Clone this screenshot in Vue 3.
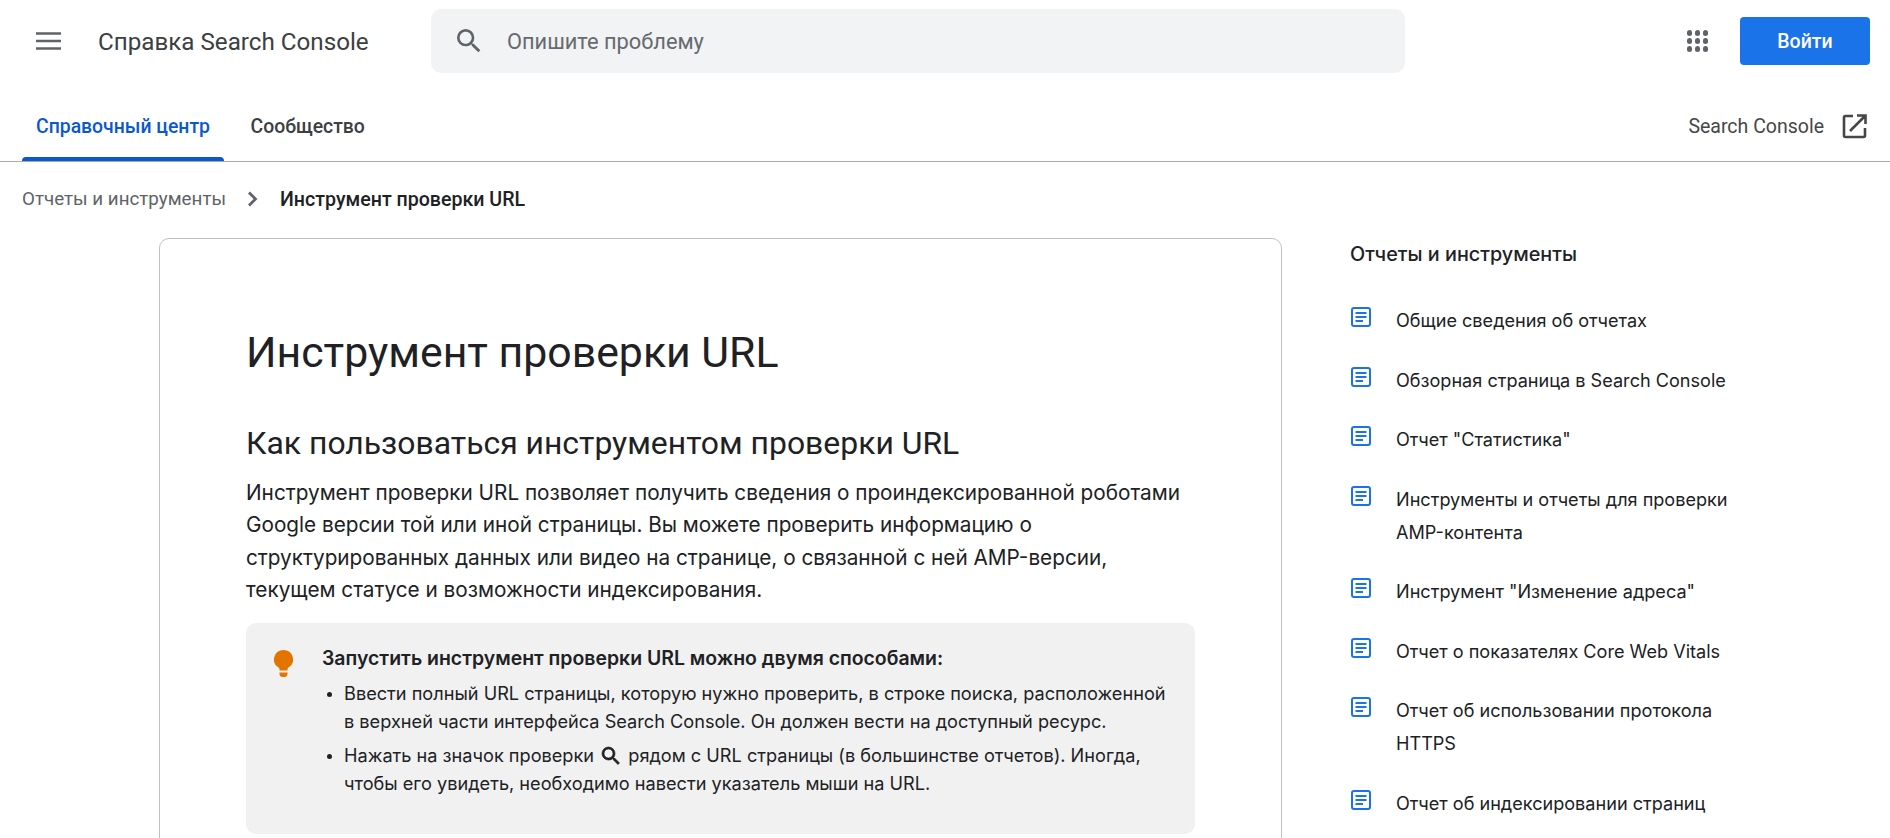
<template>
	<div class="page">
		<header class="topbar">
			<svg class="menu-icon" viewBox="0 0 25 18" width="25" height="18">
				<path d="M0 1.500h25M0 9h25M0 16.500h25" stroke="#5f6368" stroke-width="2.600" fill="none" />
			</svg>
			<div class="product">Справка Search Console</div>
			<div class="search">
				<svg viewBox="0 0 24 24" width="32" height="32">
					<path
						fill="#5f6368"
						d="M15.500 14h-.79l-.28-.27A6.470 6.470 0 0 0 16 9.500 6.500 6.500 0 1 0 9.500 16c1.610 0 3.090-.59 4.230-1.570l.27.28v.79l5 4.990L20.490 19l-4.990-5zm-6 0C7.010 14 5 11.990 5 9.500S7.010 5 9.500 5 14 7.010 14 9.500 11.990 14 9.500 14z"
					/>
				</svg>
				<span>Опишите проблему</span>
			</div>
			<div class="apps">
				<i v-for="n in 9" :key="n"></i>
			</div>
			<button class="signin">Войти</button>
		</header>

		<nav class="tabs">
			<a class="tab active">Справочный центр</a>
			<a class="tab">Сообщество</a>
			<div class="tabs-right">
				<span>Search Console</span>
				<svg viewBox="0 0 25 25" width="25" height="25">
					<path
						d="M11 2H3.500A1.500 1.500 0 0 0 2 3.500v18A1.500 1.500 0 0 0 3.500 23h18a1.500 1.500 0 0 0 1.500-1.500V14M15 1.500h8.500V10M23 2 8 17"
						fill="none"
						stroke="#444746"
						stroke-width="2.600"
					/>
				</svg>
			</div>
		</nav>

		<div class="crumbs">
			<span>Отчеты и инструменты</span>
			<svg viewBox="0 0 12 16" width="12" height="16">
				<path d="M2 1.500 8.500 8 2 14.500" fill="none" stroke="#5f6368" stroke-width="2.800" />
			</svg>
			<b>Инструмент проверки URL</b>
		</div>

		<div class="content">
			<main class="card">
				<h1>Инструмент проверки URL</h1>
				<h2>Как пользоваться инструментом проверки URL</h2>
				<p class="intro">
					Инструмент проверки URL позволяет получить сведения о проиндексированной роботами
					Google версии той или иной страницы. Вы можете проверить информацию о
					структурированных данных или видео на странице, о связанной с ней AMP-версии,
					текущем статусе и возможности индексирования.
				</p>
				<div class="note">
					<svg class="bulb" viewBox="0 0 19 27" width="19" height="27">
						<path
							fill="#e37400"
							d="M9.500 0a9.500 9.500 0 0 0-5 17.600c.6.400 1 1.100 1 1.900v1h8v-1c0-.8.4-1.500 1-1.900a9.500 9.500 0 0 0-5-17.600zM5.500 22.500h8v1.500c0 1.700-1.300 3-3 3h-2c-1.700 0-3-1.300-3-3z"
						/>
					</svg>
					<div class="note-body">
						<strong>Запустить инструмент проверки URL можно двумя способами:</strong>
						<ul>
							<li>
								<span class="line">Ввести полный URL страницы, которую нужно проверить, в строке поиска, расположенной</span>
								<span class="line">в верхней части интерфейса Search Console. Он должен вести на доступный ресурс.</span>
							</li>
							<li>
								<span class="line">
									Нажать на значок проверки
									<svg class="inline-search" viewBox="0 0 24 24" width="24" height="24">
										<path
											fill="#202124"
											stroke="#202124"
											stroke-width="0.700"
											d="M15.500 14h-.79l-.28-.27A6.470 6.470 0 0 0 16 9.500 6.500 6.500 0 1 0 9.500 16c1.610 0 3.090-.59 4.230-1.570l.27.28v.79l5 4.990L20.490 19l-4.990-5zm-6 0C7.010 14 5 11.990 5 9.500S7.010 5 9.500 5 14 7.010 14 9.500 11.990 14 9.500 14z"
										/>
									</svg>
									рядом с URL страницы (в большинстве отчетов). Иногда,
								</span>
								<span class="line">чтобы его увидеть, необходимо навести указатель мыши на URL.</span>
							</li>
						</ul>
					</div>
				</div>
			</main>

			<aside class="sidebar">
				<h3>Отчеты и инструменты</h3>
				<ul>
					<li v-for="item in links" :key="item">
						<svg viewBox="0 0 20 20" width="20" height="20">
							<rect x="1" y="1" width="18" height="18" rx="2" fill="none" stroke="#1a73e8" stroke-width="2" />
							<path d="M4.500 6h11M4.500 10h11M4.500 14h7.500" stroke="#1a73e8" stroke-width="2" />
						</svg>
						<span>{{ item }}</span>
					</li>
				</ul>
			</aside>
		</div>
	</div>
</template>

<script setup>
const links = [
	"Общие сведения об отчетах",
	"Обзорная страница в Search Console",
	'Отчет "Статистика"',
	"Инструменты и отчеты для проверки AMP-контента",
	'Инструмент "Изменение адреса"',
	"Отчет о показателях Core Web Vitals",
	"Отчет об использовании протокола HTTPS",
	"Отчет об индексировании страниц",
];
</script>

<style>
html,
body {
	margin: 0;
	height: 838px;
	overflow: hidden;
	background: #fff;
}
</style>

<style scoped>
.page {
	height: 838px;
	overflow: hidden;
	font-family: Inter, "Noto Sans", sans-serif;
	color: #202124;
}

.topbar {
	display: flex;
	align-items: center;
	height: 82px;
	box-sizing: border-box;
	padding: 0 20px 0 36px;
}

.menu-icon {
	flex: none;
}

.product {
	width: 333px;
	margin-left: 37px;
	padding-top: 1px;
	font-family: Roboto, sans-serif;
	font-size: 24.200px;
	color: #3c4043;
}

.search {
	display: flex;
	align-items: center;
	gap: 22px;
	width: 974px;
	height: 64px;
	box-sizing: border-box;
	padding-left: 22px;
	background: #f1f3f4;
	border-radius: 10px;
	font-family: Roboto, sans-serif;
	font-size: 21.800px;
	color: #666a6e;
}

.apps {
	display: grid;
	grid-template-columns: repeat(3, 5.500px);
	gap: 2.500px;
	margin-left: auto;
	margin-right: 32px;
}

.apps i {
	width: 5.500px;
	height: 5.500px;
	border-radius: 50%;
	background: #5f6368;
}

.signin {
	width: 130px;
	height: 48px;
	border: none;
	border-radius: 4px;
	background: #1a73e8;
	color: #fff;
	font-family: Roboto, sans-serif;
	font-size: 19.500px;
	font-weight: 500;
}

.tabs {
	display: flex;
	align-items: stretch;
	height: 80px;
	box-sizing: border-box;
	padding: 0 23px 0 22px;
	border-bottom: 1px solid #aaa;
}

.tab {
	position: relative;
	display: flex;
	align-items: center;
	padding: 10px 14px 0;
	margin-right: 12.500px;
	font-family: Roboto, sans-serif;
	font-size: 19.400px;
	font-weight: 500;
	color: #3c4043;
}

.tab.active {
	color: #0b57d0;
}

.tab.active::after {
	content: "";
	position: absolute;
	left: 0;
	right: 0;
	bottom: 0;
	height: 4px;
	background: #0b57d0;
	border-radius: 4px 4px 0 0;
}

.tabs-right {
	display: flex;
	align-items: center;
	gap: 18px;
	margin-left: auto;
	padding-top: 10px;
	font-family: Roboto, sans-serif;
	font-size: 19.500px;
	color: #444746;
}

.crumbs {
	display: flex;
	align-items: center;
	gap: 21px;
	height: 74px;
	padding-left: 22px;
	font-family: Roboto, sans-serif;
	font-size: 18.800px;
	color: #5f6368;
}

.crumbs b {
	font-size: 19.600px;
	font-weight: 500;
	color: #202124;
}

.content {
	display: flex;
	align-items: flex-start;
	padding-top: 2px;
	padding-left: 159px;
}

.card {
	width: 1123px;
	height: 700px;
	flex: none;
	box-sizing: border-box;
	padding: 0 86px;
	border: 1px solid #bdc1c6;
	border-radius: 10px;
}

h1 {
	margin: 85px 0 0;
	font-family: Roboto, sans-serif;
	font-size: 42.800px;
	font-weight: 400;
	line-height: 56px;
}

h2 {
	margin: 42px 0 0;
	font-family: Roboto, sans-serif;
	font-size: 31.900px;
	font-weight: 400;
	line-height: 42px;
}

.intro {
	margin: 12.500px 0 0;
	font-size: 20.740px;
	line-height: 32.600px;
}

.note {
	display: flex;
	gap: 29px;
	margin-top: 16px;
	padding: 27px 10px 31px 28px;
	background: #f1f1f1;
	border-radius: 10px;
}

.bulb {
	flex: none;
}

.note-body {
	margin-top: -6px;
	font-size: 18.170px;
	line-height: 28px;
}

.note-body strong {
	display: block;
	font-size: 19.450px;
	font-weight: 600;
}

.note-body ul {
	margin: 7px 0 0;
	padding: 0 0 0 22px;
}

.note-body li {
	margin-bottom: 6px;
}

.note-body li::marker {
	font-size: 15px;
}

.line {
	display: block;
}

.inline-search {
	vertical-align: -6px;
}

.sidebar {
	margin-left: 68px;
	width: 400px;
}

h3 {
	margin: 0;
	font-size: 19.800px;
	font-weight: 500;
	line-height: 32px;
}

.sidebar ul {
	margin: 34px 0 0;
	padding: 0;
	list-style: none;
}

.sidebar li {
	display: flex;
	gap: 25px;
	margin-bottom: 26.500px;
	margin-left: 1px;
	font-size: 18.100px;
	line-height: 33px;
}

.sidebar svg {
	flex: none;
	margin-top: 3px;
}
</style>
